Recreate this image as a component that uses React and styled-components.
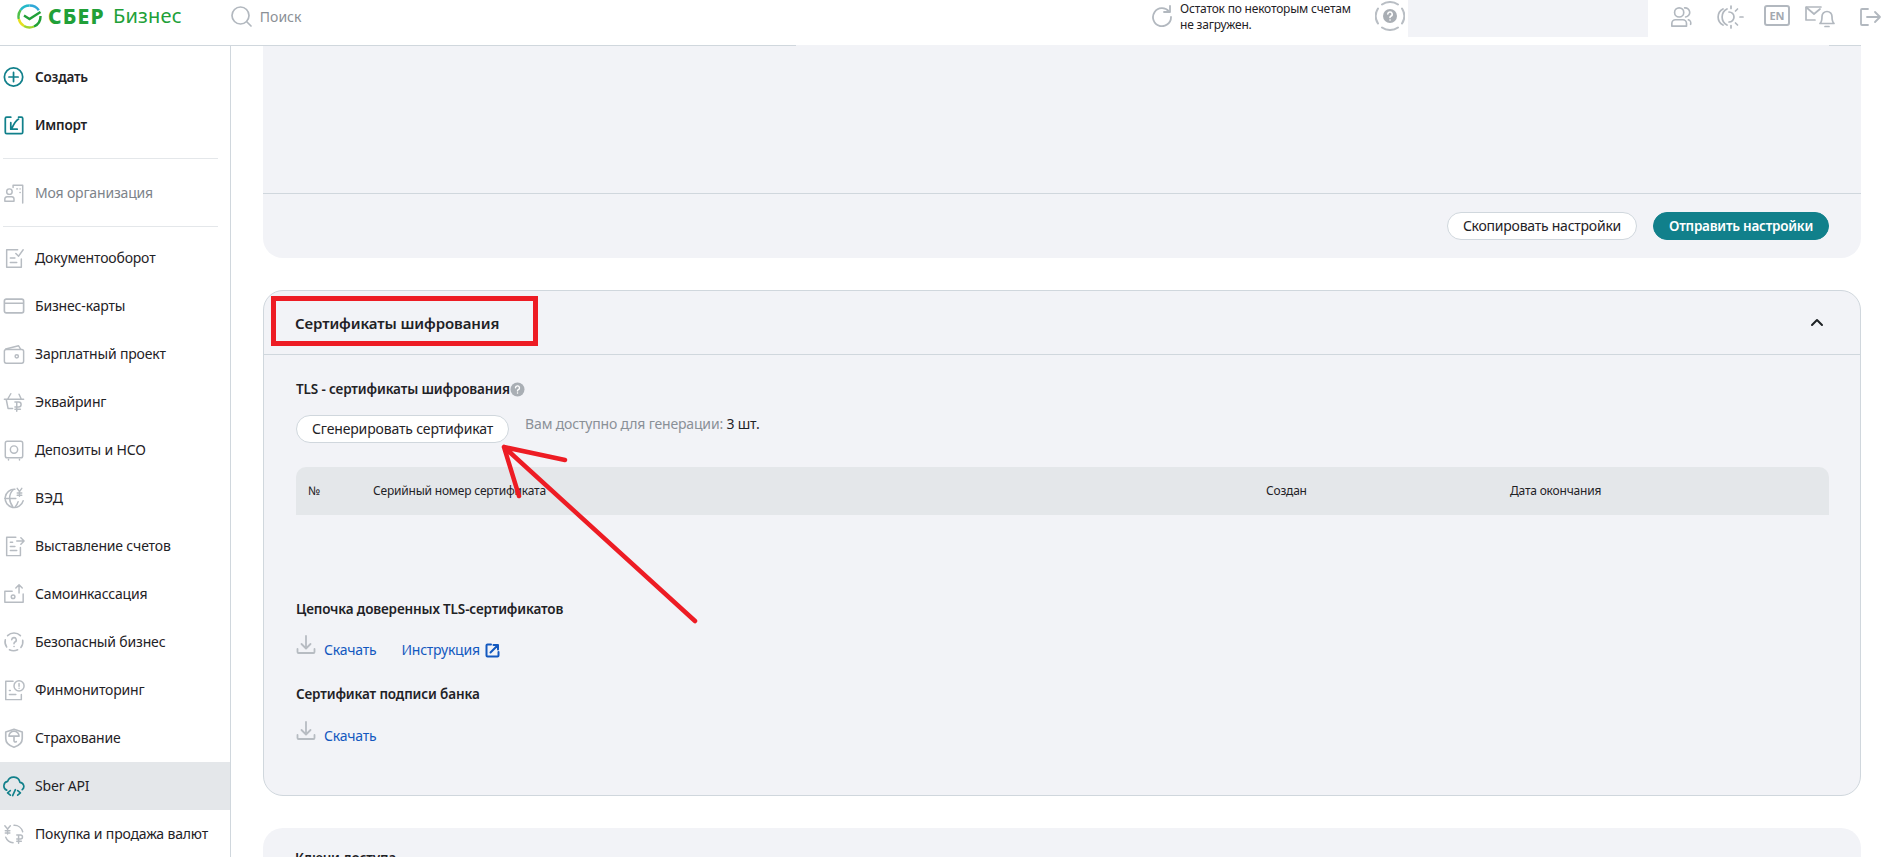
import React from "react";
import styled, { createGlobalStyle } from "styled-components";

const GlobalStyle = createGlobalStyle`
  * { box-sizing: border-box; }
  html, body { margin: 0; padding: 0; background: #fff; }
  body { font-family: "Noto Sans", "Open Sans", sans-serif; color: #1f2226; font-size: 14px; }
`;

const Page = styled.div`
  position: relative;
  width: 1882px;
  height: 857px;
  overflow: hidden;
  display: flex;
  flex-direction: column;
  background: #fff;
`;

const Header = styled.header`
  height: 45px;
  flex: none;
  display: flex;
  justify-content: space-between;
`;
const HeaderLeft = styled.div`
  display: flex;
  align-items: flex-start;
  padding: 4px 0 0 17px;
`;
const Logo = styled.div`
  display: flex;
  align-items: center;
  gap: 6px;
  height: 24px;
`;
const LogoWord = styled.span`
  font-size: ${(p) => (p.$strong ? 21 : 20)}px;
  line-height: 24px;
  font-weight: ${(p) => (p.$strong ? 800 : 400)};
  color: #21a038;
  letter-spacing: ${(p) => (p.$strong ? "1.2px" : "0.2px")};
  margin-left: ${(p) => (p.$strong ? "0" : "2px")};
`;
const Search = styled.div`
  margin-left: 49px;
  display: flex;
  align-items: center;
  gap: 8px;
  height: 24px;
  color: #8b9096;
  font-size: 14px;
`;
const HeaderRight = styled.div`
  display: flex;
  align-items: flex-start;
`;
const BalanceNote = styled.div`
  display: flex;
  gap: 8px;
  width: 223px;
  padding-top: 1px;
`;
const NoteIcon = styled.div`
  padding-top: 4px;
  height: 24px;
`;
const NoteText = styled.div`
  font-size: 12px;
  line-height: 16px;
  letter-spacing: -0.2px;
  color: #1f2226;
  white-space: nowrap;
`;
const HelpRing = styled.div`
  padding-top: 1px;
  width: 33px;
`;
const Placeholder = styled.div`
  width: 240px;
  height: 37px;
  background: #f2f3f7;
`;
const HeaderIcon = styled.div`
  margin-left: ${(p) => p.$ml}px;
  padding-top: ${(p) => p.$pt ?? 5}px;
  line-height: 0;
`;
const LangBadge = styled.div`
  width: 26px;
  height: 21px;
  border: 2px solid #b2b8bf;
  border-radius: 3px;
  color: #a3a9b0;
  font-size: 11px;
  line-height: 17px;
  font-weight: 700;
  text-align: center;
`;

const RuleRow = styled.div`
  display: flex;
  height: 1px;
  flex: none;
`;
const RuleSeg = styled.div`
  width: ${(p) => p.$w}px;
  background: ${(p) => p.$c};
`;

const Body = styled.div`
  flex: 1;
  display: flex;
  min-height: 0;
`;
const Sidebar = styled.nav`
  width: 231px;
  flex: none;
  border-right: 1px solid #d0d7dd;
  padding-top: 7px;
`;
const NavItem = styled.div`
  height: ${(p) => p.$h ?? 48}px;
  display: flex;
  align-items: center;
  gap: 10px;
  padding-left: 3px;
  background: ${(p) => (p.$active ? "#e4e7ea" : "transparent")};
  color: ${(p) => (p.$dim ? "#7d838a" : "#1f2226")};
  font-weight: ${(p) => (p.$bold ? 600 : 400)};
  font-size: ${(p) => (p.$bold ? 13.5 : 14)}px;
  letter-spacing: ${(p) => (p.$bold ? -0.2 : -0.17)}px;
  white-space: nowrap;
`;
const NavLabel = styled.span`
  padding-bottom: ${(p) => p.$pb ?? 2}px;
`;
const NavDivider = styled.div`
  height: 1px;
  margin: ${(p) => p.$m};
  margin-left: 3px;
  width: 215px;
  background: #e4e7ea;
`;

const Main = styled.main`
  flex: 1;
  min-width: 0;
  padding: 0 21px 0 32px;
  display: flex;
  flex-direction: column;
  gap: 32px;
`;
const SettingsCard = styled.section`
  flex: none;
  background: #f2f3f7;
  border-radius: 0 0 20px 20px;
`;
const SettingsBlank = styled.div`
  height: 148px;
  border-bottom: 1px solid #d0d7dd;
`;
const SettingsFooter = styled.div`
  height: 64px;
  padding: 18px 32px 0 0;
  display: flex;
  justify-content: flex-end;
  gap: 16px;
`;
const Button = styled.button`
  height: 28px;
  padding: 0 15px;
  border-radius: 14px;
  font-family: inherit;
  font-size: ${(p) => (p.$primary ? 13.5 : 14)}px;
  letter-spacing: ${(p) => p.$ls ?? -0.15}px;
  line-height: 20px;
  white-space: nowrap;
  font-weight: ${(p) => (p.$primary ? 600 : 400)};
  color: ${(p) => (p.$primary ? "#fff" : "#1f2226")};
  background: ${(p) => (p.$primary ? "#11808b" : "#fff")};
  border: 1px solid ${(p) => (p.$primary ? "#11808b" : "#d0d7dd")};
`;
const CertCard = styled.section`
  flex: none;
  background: #f2f3f7;
  border: 1px solid #d0d7dd;
  border-radius: 20px;
`;
const CertHeader = styled.div`
  height: 64px;
  padding: 0 36px 0 31px;
  border-bottom: 1px solid #d0d7dd;
  display: flex;
  align-items: center;
  justify-content: space-between;
`;
const CertTitle = styled.h2`
  margin: 0;
  font-size: 15px;
  letter-spacing: -0.1px;
  line-height: 24px;
  font-weight: 600;
  color: #1f2226;
`;
const CertBody = styled.div`
  padding: 24px 31px 49px 32px;
`;
const SectionTitle = styled.h3`
  margin: ${(p) => p.$mt ?? 0}px 0 0;
  font-size: 13.5px;
  letter-spacing: -0.14px;
  line-height: 20px;
  font-weight: 600;
  color: #1f2226;
  display: flex;
  align-items: center;
`;
const ActionRow = styled.div`
  margin-top: 16px;
  display: flex;
  gap: 16px;
  align-items: flex-start;
`;
const Hint = styled.div`
  font-size: 14px;
  letter-spacing: -0.17px;
  line-height: 18px;
  color: #8a9097;
  white-space: nowrap;
`;
const HintValue = styled.span`
  color: #1f2226;
`;
const TableHead = styled.div`
  margin-top: 24px;
  height: 48px;
  background: #e4e7ea;
  border-radius: 10px 10px 0 0;
  padding: 0 0 2px 12px;
  display: grid;
  grid-template-columns: 65px 893px 244px 1fr;
  align-items: center;
  font-size: 12px;
  letter-spacing: -0.2px;
  color: #1f2226;
`;
const LinkRow = styled.div`
  margin-top: ${(p) => p.$mt ?? 16}px;
  height: 25px;
  display: flex;
  align-items: flex-end;
`;
const DownloadIcon = styled.svg`
  align-self: flex-start;
  flex: none;
  margin-right: 8px;
`;
const TextLink = styled.a`
  font-size: 14px;
  letter-spacing: -0.22px;
  line-height: 20px;
  color: #1358bf;
  display: inline-flex;
  align-items: center;
  gap: 5px;
  margin-left: ${(p) => p.$ml ?? 0}px;
`;
const KeysCard = styled.section`
  flex: none;
  height: 120px;
  background: #f2f3f7;
  border-radius: 20px 20px 0 0;
  padding: 20px 32px;
`;
const Annotations = styled.svg`
  position: absolute;
  left: 0;
  top: 0;
  pointer-events: none;
`;

const G = "#b7bcc2";
const T = "#11808b";
const Svg = ({ children, c = G, size = 22, sw = 1.6 }) => (
  <svg width={size} height={size} viewBox="0 0 24 24" fill="none" stroke={c} strokeWidth={sw} strokeLinecap="round" strokeLinejoin="round" style={{ flex: "none" }}>
    {children}
  </svg>
);

const icons = {
  create: <Svg c={T} sw={1.9}><circle cx="11.5" cy="12" r="10" /><path d="M11.5 7v10M6.5 12h10" /></Svg>,
  import: <Svg c={T} sw={1.9}><path d="M8.500 3.500H4a1.500 1.500 0 0 0-1.500 1.500v15A1.500 1.500 0 0 0 4 21.500h16a1.500 1.500 0 0 0 1.500-1.500V5A1.500 1.500 0 0 0 20 3.500h-3" /><path d="M17 5.500c-3 1.500-5 5-7.500 10.500M8.500 9.500v7h7" /></Svg>,
  org: <Svg><circle cx="7" cy="10.5" r="3" /><path d="M2 21v-2.500a2.500 2.500 0 0 1 2.500-2.500h5a2.500 2.500 0 0 1 2.500 2.500V21z" /><path d="M11 6V3.500h10.500V23M15 7.500h.8M18.500 7.500h.3M18.500 11.500h.3" /></Svg>,
  docs: <Svg><path d="M16 3H4v19h16V13" /><path d="M8 12h5M8 17h7" /><path d="M14 7l3 3 5-7" /></Svg>,
  card: <Svg sw={1.8}><rect x="1.500" y="4.500" width="21" height="15" rx="2" /><path d="M2 9h20" /></Svg>,
  salary: <Svg><rect x="1.500" y="7" width="21" height="15" rx="2" /><path d="M3 6.500 17 3l2 3.500" /><circle cx="15" cy="14.500" r="1.800" /></Svg>,
  acquiring: <Svg><path d="M1.500 9h21M5 9l3.500-6M17.500 3.500 20 9M3.500 9l2 10h5" /><path d="M15 12v10M13 20h6M13 17.500h4a2.500 2.500 0 0 0 0-5.500h-4" /></Svg>,
  deposit: <Svg><rect x="2.500" y="2.500" width="19" height="18" rx="2" /><circle cx="12" cy="11.500" r="4" /><path d="M6 23v-1M18 23v-1" /></Svg>,
  ved: <Svg><path d="M13 2.500A10 10 0 1 0 22 15" /><path d="M2 12.500h12M11 3c-5 5-5 13 0 19M13 22c2-2 3-4 3.500-6" /><path d="M15.500 1.500 18 5l2.500-3.500M18 5v5M15.500 6.500h5M15.500 9h5" /></Svg>,
  invoice: <Svg><path d="M14 2.500H4v20h15v-9" /><path d="M8 8h2.500M8 12.500h5M8 17h7" /><path d="M15 6.500h8M19.500 3l3.500 3.500-3.500 3.500" /></Svg>,
  cash: <Svg><path d="M10 9H2v12h20v-9" /><circle cx="11" cy="15" r="2" /><path d="M17.500 11V2M14 5.500 17.500 2 21 5.500" /></Svg>,
  safe: <Svg sw={1.7}><path d="M5 5A10 10 0 0 1 19 5M21.500 10a10 10 0 0 1-2 8M16 20.500a10 10 0 0 1-9 0M4 17.500a10 10 0 0 1-1.500-8" /><path d="M9.500 9.500a2.500 2.500 0 1 1 3.500 2.500c-.8.400-1 1-1 2M12 17h.1" /></Svg>,
  finmon: <Svg><path d="M11 2.500H3v20h17V17" /><path d="M7 12.500h1M7 17h7" /><circle cx="17.500" cy="7.500" r="5.500" /><path d="M17.500 5v3M17.500 10.200h.1" /></Svg>,
  insurance: <Svg sw={1.8}><path d="M12 2.500 21 5.500v7c0 5-4 8-9 9.500-5-1.500-9-4.500-9-9.500v-7z" /><path d="M6.500 10a5.500 5.500 0 0 1 11 0zM12 10v5a1.500 1.500 0 0 0 2.500 1" /></Svg>,
  api: <Svg c={T} sw={1.8}><path d="M4 16.500A5 5 0 0 1 5 7a7 7 0 0 1 13.500 1 4.500 4.500 0 0 1 2.500 8" /><path d="M8 17l-3 2.500L8 22M16 17l3 2.500-3 2.500M13.500 16l-3 6.500" /></Svg>,
  fx: <Svg><path d="M2 3l3 3.500L8 3M5 6.500V12M2.500 8.500h5M2.500 11h5" /><path d="M12 2.500a9.500 9.500 0 0 1 9.500 7M3 15.500A9.500 9.500 0 0 0 11 21.500" /><path d="M17 13v9M15 20h5M15 17.500h4a2.200 2.200 0 0 0 0-4.500h-4" /></Svg>,
};

const navMain = [
  ["Документооборот", "docs"],
  ["Бизнес-карты", "card"],
  ["Зарплатный проект", "salary"],
  ["Эквайринг", "acquiring"],
  ["Депозиты и НСО", "deposit"],
  ["ВЭД", "ved"],
  ["Выставление счетов", "invoice"],
  ["Самоинкассация", "cash"],
  ["Безопасный бизнес", "safe"],
  ["Финмониторинг", "finmon"],
  ["Страхование", "insurance"],
  ["Sber API", "api"],
  ["Покупка и продажа валют", "fx"],
];

const SberLogo = () => (
  <svg width="25" height="25" viewBox="0 0 25 25" fill="none" strokeWidth="2.4" strokeLinecap="butt">
    <path d="M21.800 6.200A11 11 0 0 0 12.500 1.500" stroke="#2fa8d8" />
    <path d="M12.500 1.500A11 11 0 0 0 3.600 6" stroke="#25b9c9" />
    <path d="M3.600 6A11 11 0 0 0 1.800 15" stroke="#4fc04a" />
    <path d="M1.800 15A11 11 0 0 0 7 22" stroke="#e6e01f" />
    <path d="M7 22A11 11 0 0 0 17 22.500" stroke="#9fd62c" />
    <path d="M17 22.500A11 11 0 0 0 23.500 12" stroke="#21a038" />
    <path d="M7 11.500l5.500 3.500 11-7" stroke="#21a038" />
  </svg>
);

const Download = () => (
  <DownloadIcon width="20" height="20" viewBox="0 0 20 20" fill="none" stroke="#b7bcc2" strokeWidth="1.800" strokeLinecap="round" strokeLinejoin="round">
    <path d="M10 1v12M5.500 9l4.500 4.500L14.500 9" />
    <path d="M1.500 14v3a1 1 0 0 0 1 1h15a1 1 0 0 0 1-1v-3" />
  </DownloadIcon>
);

export default function App() {
  return (
    <>
      <GlobalStyle />
      <Page>
        <Header>
          <HeaderLeft>
            <Logo>
              <SberLogo />
              <LogoWord $strong>СБЕР</LogoWord>
              <LogoWord>Бизнес</LogoWord>
            </Logo>
            <Search>
              <svg width="21" height="21" viewBox="0 0 21 21" fill="none" stroke="#b2b8bf" strokeWidth="1.700" strokeLinecap="round">
                <circle cx="9.500" cy="9.500" r="8.500" />
                <path d="M16 16l4 4" />
              </svg>
              Поиск
            </Search>
          </HeaderLeft>
          <HeaderRight>
            <BalanceNote>
              <NoteIcon>
                <svg width="20" height="22" viewBox="0 0 20 22" fill="none" stroke="#b2b8bf" strokeWidth="1.800" strokeLinecap="round" strokeLinejoin="round">
                  <path d="M17 6.500A9 9 0 1 0 19 12" />
                  <path d="M18 1v6h-6" />
                </svg>
              </NoteIcon>
              <NoteText>
                Остаток по некоторым счетам
                <br />
                не загружен.
              </NoteText>
            </BalanceNote>
            <HelpRing>
              <svg width="30" height="30" viewBox="0 0 30 30" fill="none" stroke="#b9bec4" strokeWidth="2" strokeLinecap="round">
                <path d="M7 3.500A14 14 0 0 1 23 3.500M27 7.500A14 14 0 0 1 27 22.500M23 26.500A14 14 0 0 1 7 26.500M3 22.500A14 14 0 0 1 3 7.500" />
                <circle cx="15" cy="15" r="7" fill="#a9aeb4" stroke="none" />
                <path d="M12.800 13a2.200 2.200 0 1 1 3 2.200c-.6.300-.8.700-.8 1.300M15 19h.1" stroke="#fff" strokeWidth="1.600" />
              </svg>
            </HelpRing>
            <Placeholder />
            <HeaderIcon $ml={22} $pt={6}>
              <Svg c="#b2b8bf" size={22} sw={1.8}>
                <circle cx="10" cy="7" r="5" />
                <path d="M2 22v-3a4 4 0 0 1 4-4h8a4 4 0 0 1 4 4v3z" />
                <path d="M16 2a5 5 0 0 1 1 10M20 15a4 4 0 0 1 2.500 5" />
              </Svg>
            </HeaderIcon>
            <HeaderIcon $ml={24} $pt={5}>
              <svg width="28" height="24" viewBox="0 0 28 24" fill="none" stroke="#b2b8bf" strokeWidth="1.700" strokeLinecap="round">
                <path d="M7 4a9 9 0 0 0 0 16M11 4a9 9 0 0 0 0 16" />
                <path d="M13 7a5 5 0 1 1 0 10" />
                <path d="M15 1v2.500M15 20.500V23M21.500 4l-2 2M21.500 20l-2-2M24 12h3" />
              </svg>
            </HeaderIcon>
            <HeaderIcon $ml={20} $pt={5}>
              <LangBadge>EN</LangBadge>
            </HeaderIcon>
            <HeaderIcon $ml={15} $pt={6}>
              <svg width="32" height="22" viewBox="0 0 32 22" fill="none" stroke="#b2b8bf" strokeWidth="1.700" strokeLinecap="round" strokeLinejoin="round">
                <path d="M16 1H1v13h9" />
                <path d="M1.500 1.500 9 8l6-5" />
                <path d="M15 17.500c2-1.500 2-4 2-7a5 5 0 0 1 10 0c0 3 0 5.500 2 7z" />
                <path d="M20 20.500h4" />
              </svg>
            </HeaderIcon>
            <HeaderIcon $ml={23} $pt={8}>
              <svg width="22" height="18" viewBox="0 0 22 18" fill="none" stroke="#b2b8bf" strokeWidth="1.800" strokeLinecap="round" strokeLinejoin="round">
                <path d="M8 1H2a1 1 0 0 0-1 1v14a1 1 0 0 0 1 1h6" />
                <path d="M7 9h13M15 4l5 5-5 5" />
              </svg>
            </HeaderIcon>
          </HeaderRight>
        </Header>
        <RuleRow>
          <RuleSeg $w={796} $c="#d0d7dd" />
          <RuleSeg $w={1033} $c="#f2f3f7" />
          <RuleSeg $w={32} $c="#d0d7dd" />
        </RuleRow>
        <Body>
          <Sidebar>
            <NavItem $bold>{icons.create}<NavLabel $pb={0}>Создать</NavLabel></NavItem>
            <NavItem $bold>{icons.import}<NavLabel $pb={0}>Импорт</NavLabel></NavItem>
            <NavDivider $m="9px 0 0" />
            <NavItem $dim $h={67}>{icons.org}<NavLabel $pb={1}>Моя организация</NavLabel></NavItem>
            <NavDivider $m="0 0 7px" />
            {navMain.map(([label, icon]) => (
              <NavItem key={label} $active={label === "Sber API"}>
                {icons[icon]}
                <NavLabel>{label}</NavLabel>
              </NavItem>
            ))}
          </Sidebar>
          <Main>
            <SettingsCard>
              <SettingsBlank />
              <SettingsFooter>
                <Button $ls={-0.24}>Скопировать настройки</Button>
                <Button $primary $ls={-0.25}>Отправить настройки</Button>
              </SettingsFooter>
            </SettingsCard>
            <CertCard>
              <CertHeader>
                <CertTitle>Сертификаты шифрования</CertTitle>
                <svg width="14" height="9" viewBox="0 0 14 9" fill="none" stroke="#1f2226" strokeWidth="2" strokeLinecap="round" strokeLinejoin="round">
                  <path d="M2 7l5-5 5 5" />
                </svg>
              </CertHeader>
              <CertBody>
                <SectionTitle>
                  TLS - сертификаты шифрования
                  <svg width="15" height="15" viewBox="0 0 15 15" fill="none">
                    <circle cx="7.500" cy="7.500" r="7" fill="#a9aeb4" />
                    <path d="M5.500 5.800a2 2 0 1 1 2.800 1.900c-.6.300-.8.700-.8 1.200M7.500 11h.1" stroke="#fff" strokeWidth="1.400" strokeLinecap="round" />
                  </svg>
                </SectionTitle>
                <ActionRow>
                  <Button>Сгенерировать сертификат</Button>
                  <Hint>
                    Вам доступно для генерации: <HintValue>3 шт.</HintValue>
                  </Hint>
                </ActionRow>
                <TableHead>
                  <span>№</span>
                  <span>Серийный номер сертификата</span>
                  <span>Создан</span>
                  <span>Дата окончания</span>
                </TableHead>
                <SectionTitle $mt={84}>Цепочка доверенных TLS-сертификатов</SectionTitle>
                <LinkRow>
                  <Download />
                  <TextLink>Скачать</TextLink>
                  <TextLink $ml={25}>
                    Инструкция
                    <svg width="15" height="15" viewBox="0 0 15 15" fill="none" stroke="#1358bf" strokeWidth="2" strokeLinecap="round" strokeLinejoin="round">
                      <path d="M6 1.500H2.500a1 1 0 0 0-1 1v10a1 1 0 0 0 1 1h10a1 1 0 0 0 1-1V9" />
                      <path d="M5.500 9.500 12 3M8.500 2h4.500v4.500" />
                    </svg>
                  </TextLink>
                </LinkRow>
                <SectionTitle $mt={24}>Сертификат подписи банка</SectionTitle>
                <LinkRow $mt={17}>
                  <Download />
                  <TextLink>Скачать</TextLink>
                </LinkRow>
              </CertBody>
            </CertCard>
            <KeysCard>
              <SectionTitle>Ключи доступа</SectionTitle>
            </KeysCard>
          </Main>
        </Body>
        <Annotations width="1882" height="857" viewBox="0 0 1882 857" fill="none" stroke="#ed1c24">
          <rect x="273.500" y="298.500" width="262" height="45" strokeWidth="5" />
          <path d="M504 447 695 621M504 447 565 460M504 447 519 496" strokeWidth="4.500" strokeLinecap="round" />
        </Annotations>
      </Page>
    </>
  );
}
